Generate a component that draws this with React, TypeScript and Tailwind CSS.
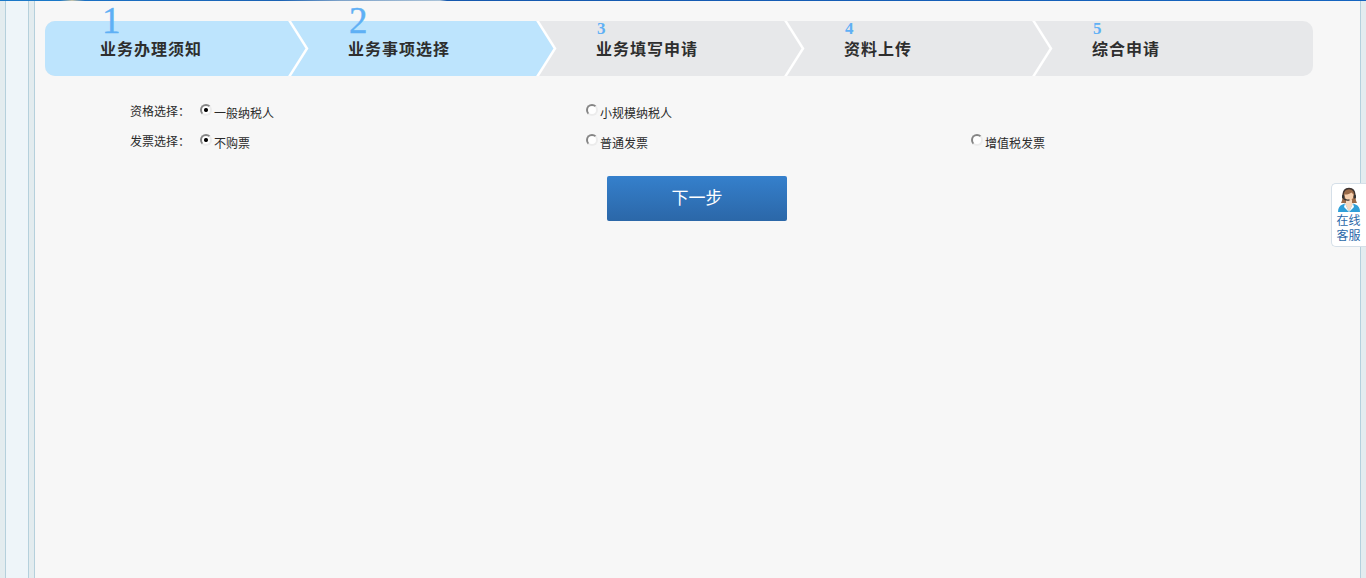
import React from 'react';

const steps = [
  { no: '1', title: '业务办理须知', done: true },
  { no: '2', title: '业务事项选择', done: true },
  { no: '3', title: '业务填写申请', done: false },
  { no: '4', title: '资料上传', done: false },
  { no: '5', title: '综合申请', done: false },
];

const radioClass =
  'appearance-none shrink-0 w-[12px] h-[12px] rounded-full border-2 border-t-[#858585] border-l-[#858585] border-r-[#ececec] border-b-[#ececec] bg-white checked:bg-[radial-gradient(circle,#000_0,#000_1.5px,#fff_2.5px)]';

function Radio({ name, label, checked, className }: { name: string; label: string; checked?: boolean; className: string }) {
  return (
    <label className={`flex items-start gap-[2px] ${className}`}>
      <input type="radio" name={name} defaultChecked={checked} className={radioClass} />
      <span className="mt-[1px] leading-[18px] text-[12px] text-[#2a2a2a]">{label}</span>
    </label>
  );
}

function Rail() {
  return (
    <div className="flex shrink-0 h-full">
      <div className="w-[5px] bg-[#e3ecef] border-r border-[#b5d0dc] box-content" />
      <div className="w-[22px] bg-[#eef5f9] border-r border-[#b5d0dc] box-content" />
      <div className="w-[5px] bg-[#e3ecef] border-r border-[#b5d0dc] box-content" />
    </div>
  );
}

function Avatar() {
  return (
    <svg width="24" height="26" viewBox="0 0 24 26" className="block">
      {/* hair, falling behind the shoulders */}
      <path d="M5.500 9c0-5 3-7.500 6.500-7.500S18.500 4 18.500 9c0 3 .5 5 1.500 7H4c1-2 1.500-4 1.500-7z" fill="#9a6a48" />
      {/* neck and chest */}
      <path d="M9 13h6v3l2 1-5 8-5-8 2-1z" fill="#f6d9c0" />
      {/* jacket */}
      <path d="M1 25c0-4 1.500-6.500 4.500-7.500L8 16.500l4 8.500 4-8.500 2.500 1c3 1 4.500 3.500 4.500 7.500z" fill="#2f9fd8" />
      <path d="M8 16.500l4 8.500-5-5zM16 16.500l-4 8.500 5-5z" fill="#fff" />
      {/* face */}
      <path d="M7.500 7.500c2 .3 5.500-.5 7-2 .8 1 2 1.500 2 2.500 0 3.500-2.200 6-4.500 6s-4.500-3-4.500-6.500z" fill="#f5cfae" />
      {/* headset */}
      <path d="M6 9c0-5 2.500-7.500 6-7.500S18 4 18 9" fill="none" stroke="#3d3330" strokeWidth="1.300" />
      <path d="M6.500 10.500c0 2 2.500 3 6 2.300" fill="none" stroke="#333" strokeWidth="1.200" />
      <rect x="5" y="8" width="2.400" height="3.500" rx="1" fill="#333" />
      <rect x="16.600" y="8" width="2.400" height="3.500" rx="1" fill="#333" />
    </svg>
  );
}

export default function App() {
  return (
    <div className="relative flex flex-col h-screen overflow-hidden bg-[#f7f7f7] font-['Liberation_Sans','Noto_Sans_CJK_SC',sans-serif]">
      {/* Top hairline */}
      <div className="h-[1px] shrink-0 bg-[linear-gradient(90deg,#1a78c8_0,#1a78c8_60px,#c9c4a8_72px,#1a70c4_85px,#1a62b4_280px,#7fa3c9_340px,#a9c2d8_440px,#1558ae_447px,#1565c0_1366px)]" />

      <div className="flex flex-1 min-h-0">
        <Rail />

        <main className="flex-1 min-w-0 bg-[#f7f7f7] pl-[10px] pr-[47px] pt-[20px]">
          {/* Steps */}
          <ol className="flex h-[55px] rounded-[10px] bg-[#e7e8ea]">
            {steps.map((step, i) => (
              <li
                key={step.no}
                className={`relative ${i === 0 ? 'w-[244px] pl-[55px] rounded-l-[10px]' : i === 4 ? 'flex-1 pl-[59px]' : 'w-[248px] pl-[59px]'} ${step.done ? 'bg-[#bde4fd]' : ''}`}
              >
                {i < 4 && (
                  <svg width="24" height="55" viewBox="0 0 24 55" className="absolute left-full top-0 -ml-[2px] z-10">
                    <path d="M2 0L20 27.500L2 55L0 55L0 0z" fill={step.done ? '#bde4fd' : '#e7e8ea'} />
                    <path d="M2 -1L20 27.500L2 56" fill="none" stroke="#fff" strokeWidth="2.500" />
                  </svg>
                )}
                <span
                  className={`absolute z-20 ${i === 0 ? 'left-[57px]' : 'left-[60px]'} ${
                    i < 2
                      ? "-top-[20px] leading-[40px] text-[37px] font-['Liberation_Serif'] text-[#5fb0f5] [-webkit-text-stroke:0.4px_#5fb0f5]"
                      : "top-0 leading-[16px] text-[17px] font-['Liberation_Serif'] font-bold text-[#5fb0f5]"
                  }`}
                >
                  {step.no}
                </span>
                <span className="absolute z-20 top-[19px] whitespace-nowrap text-[16px] leading-[20px] tracking-[1px] font-semibold text-[#2e2e2e]">
                  {step.title}
                </span>
              </li>
            ))}
          </ol>

          {/* Options */}
          <form className="mt-[28px] pl-[85px] text-[12px] text-[#2a2a2a]">
            <div className="flex items-start h-[30px]">
              <span className="w-[70px] mt-[1px] leading-[14px]">资格选择：</span>
              <Radio name="zg" label="一般纳税人" checked className="w-[386px]" />
              <Radio name="zg" label="小规模纳税人" className="w-[385px]" />
            </div>
            <div className="flex items-start h-[30px]">
              <span className="w-[70px] mt-[1px] leading-[14px]">发票选择：</span>
              <Radio name="fp" label="不购票" checked className="w-[386px]" />
              <Radio name="fp" label="普通发票" className="w-[385px]" />
              <Radio name="fp" label="增值税发票" className="w-[100px]" />
            </div>
            <button
              type="button"
              className="block mt-[12px] ml-[477px] w-[180px] h-[45px] rounded-[2px] bg-gradient-to-b from-[#3580cc] to-[#2b67a8] text-[17px] text-white"
            >
              下一步
            </button>
          </form>
        </main>

        <div className="shrink-0 w-[5px] box-content bg-[#e3ecef] border-l border-[#b5d0dc]" />
      </div>

      {/* Online service tab */}
      <div className="absolute right-0 top-[183px] w-[35px] h-[64px] flex flex-col items-center pt-[3px] bg-white border border-r-0 border-[#d5dfe8] rounded-l-[5px]">
        <Avatar />
        <div className="mt-[1px] -ml-[1px] text-[12px] leading-[15px] text-center text-[#2b68a8]">
          在线
          <br />
          客服
        </div>
      </div>
    </div>
  );
}
